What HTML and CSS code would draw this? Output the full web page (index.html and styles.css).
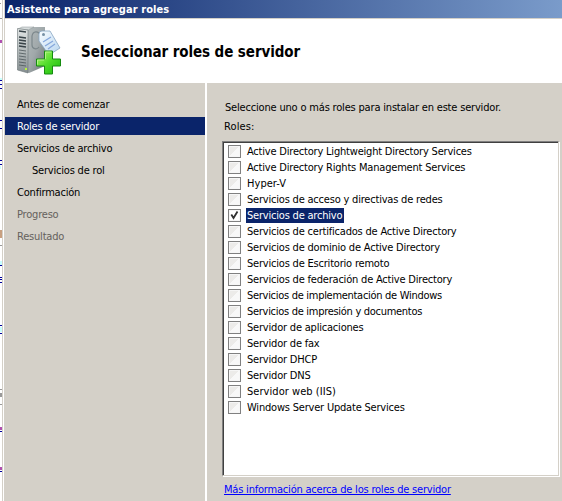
FILE: index.html
```html
<!DOCTYPE html>
<html lang="es">
<head>
<meta charset="utf-8">
<title>Asistente para agregar roles</title>
<link rel="stylesheet" href="styles.css">
</head>
<body>
<div class="screen">
  <div class="edge">
    <svg width="5" height="501" viewBox="0 0 5 501" shape-rendering="crispEdges">
      <path fill="#d4d0c8" d="M2 0h1v501h-1zM4 0h1v501h-1z"/>
      <path fill="#999" d="M0 3h1v1h-1zM0 18h2v1h-2zM0 245h2v1h-2zM0 389h2v1h-2zM0 393h2v4h-2zM0 404h2v1h-2z"/>
      <path fill="#00009c" d="M0 80h2v1h-2zM0 84h2v1h-2zM0 88h2v1h-2zM0 120h2v1h-2zM0 128h2v1h-2zM0 160h2v1h-2zM0 164h2v1h-2zM0 265h2v1h-2zM0 277h2v1h-2zM0 279h2v1h-2zM0 282h2v1h-2zM0 325h2v1h-2zM0 333h2v1h-2zM0 431h2v1h-2zM0 471h2v1h-2z"/>
      <path fill="#b050b0" d="M0 40h2v3h-2zM0 427h2v3h-2zM0 467h2v3h-2z"/>
      <path fill="#c8ffff" d="M0 78h2v2h-2zM0 166h1v3h-1zM0 261h2v4h-2zM0 327h2v5h-2z"/>
      <path fill="#c8a080" d="M0 230h2v8h-2z"/>
    </svg>
  </div>
  <div class="window">
    <div class="titlebar"><span>Asistente para agregar roles</span></div>
    <header class="banner">
      <svg class="icon" width="48" height="50" viewBox="0 0 48 50">
        <defs>
          <linearGradient id="side" x1="0" y1="0" x2="1" y2="1"><stop offset="0" stop-color="#b5bcbd"/><stop offset=".5" stop-color="#a0a8aa"/><stop offset="1" stop-color="#697174"/></linearGradient>
          <linearGradient id="front" x1="0" y1="0" x2="0" y2="1"><stop offset="0" stop-color="#e1e5e5"/><stop offset="1" stop-color="#858e90"/></linearGradient>
          <linearGradient id="plus" x1="0" y1="0" x2="1" y2="1"><stop offset="0" stop-color="#b3f56f"/><stop offset=".5" stop-color="#50dc2a"/><stop offset="1" stop-color="#18b90c"/></linearGradient>
          <linearGradient id="tag" x1="0" y1="0" x2="1" y2="1"><stop offset="0" stop-color="#f8fcff"/><stop offset="1" stop-color="#b7d5ef"/></linearGradient>
        </defs>
        <path fill="url(#side)" d="M11 4 16 1h13v39L13 47 11 46z"/>
        <path fill="#d8dddd" stroke="#899295" stroke-width=".5" d="M2 3 6 1h12l-6 3z"/>
        <path fill="url(#front)" stroke="#697376" stroke-width=".6" d="M1.5 2.5 12 4v43L1.5 44z"/>
        <path stroke="#384348" stroke-width="1.6" d="M3 5l7 1M3 11l7 1M3 14l7 1M3 17l7 1M3 20l7 1"/>
        <path stroke="#4c575b" stroke-width=".8" d="M3 24l7 1M3 27l7 1M3 30l7 1M3 33l7 1M3 36l7 1M3 39l7 1"/>
        <path fill="#b8f43d" d="M9 42h2v2h-2z"/>
        <path fill="none" stroke="#7c878b" stroke-width="1.2" d="M25 10c-3-6-8-5-9 0v9c0 4 5 5 7 2"/>
        <path fill="url(#tag)" stroke="#86a4c1" stroke-width=".8" d="M23 8q0-3 3-3l8 0 10 17-11 7-10-14z"/>
        <circle cx="27.500" cy="8.500" r="1.500" fill="#7791a5"/>
        <path stroke="#85a7dc" stroke-width="1.3" d="M27 16l8-5M29 20l8-5M32 23l7-5"/>
        <path fill="url(#plus)" stroke="#168b10" stroke-linejoin="round" d="M28.500 25h8v8h8v7h-8v8h-8v-8h-8v-7h8z"/>
        <path fill="none" stroke="#c0f799" stroke-width=".8" d="M29.500 33v-7h6M21.500 38.500V34H28"/>
      </svg>
      <h1><span>Seleccionar roles de servidor</span></h1>
    </header>
    <div class="body">
      <nav class="steps">
        <div class="step"><span>Antes de comenzar</span></div>
        <div class="step current"><span>Roles de servidor</span></div>
        <div class="step"><span>Servicios de archivo</span></div>
        <div class="step sub"><span>Servicios de rol</span></div>
        <div class="step"><span>Confirmación</span></div>
        <div class="step pending"><span>Progreso</span></div>
        <div class="step pending"><span>Resultado</span></div>
      </nav>
      <main class="content">
        <p class="intro"><span>Seleccione uno o más roles para instalar en este servidor.</span></p>
        <p class="label"><span>Roles:</span></p>
        <div class="list">
          <div class="role"><i class="box"></i><span>Active Directory Lightweight Directory Services</span></div>
          <div class="role"><i class="box"></i><span>Active Directory Rights Management Services</span></div>
          <div class="role loose"><i class="box"></i><span>Hyper-V</span></div>
          <div class="role"><i class="box"></i><span>Servicios de acceso y directivas de redes</span></div>
          <div class="role selected"><i class="box"><svg width="11" height="11" viewBox="0 0 11 11"><path d="M2.300 4.500 4.500 8 8.500 1.500" fill="none" stroke="#303030" stroke-width="1.800"/></svg></i><span>Servicios de archivo</span></div>
          <div class="role"><i class="box"></i><span>Servicios de certificados de Active Directory</span></div>
          <div class="role"><i class="box"></i><span>Servicios de dominio de Active Directory</span></div>
          <div class="role"><i class="box"></i><span>Servicios de Escritorio remoto</span></div>
          <div class="role"><i class="box"></i><span>Servicios de federación de Active Directory</span></div>
          <div class="role tight"><i class="box"></i><span>Servicios de implementación de Windows</span></div>
          <div class="role tight"><i class="box"></i><span>Servicios de impresión y documentos</span></div>
          <div class="role"><i class="box"></i><span>Servidor de aplicaciones</span></div>
          <div class="role"><i class="box"></i><span>Servidor de fax</span></div>
          <div class="role"><i class="box"></i><span>Servidor DHCP</span></div>
          <div class="role"><i class="box"></i><span>Servidor DNS</span></div>
          <div class="role loose"><i class="box"></i><span>Servidor web (IIS)</span></div>
          <div class="role"><i class="box"></i><span>Windows Server Update Services</span></div>
        </div>
        <a class="more"><span>Más información acerca de los roles de servidor</span></a>
      </main>
    </div>
  </div>
</div>
</body>
</html>
```
FILE: styles.css
```css
* { box-sizing: border-box; }
body {
  margin: 0;
  overflow: hidden;
  background: #fff;
  color: #000;
  font: 11px/16px "DejaVu Sans Condensed", "DejaVu Sans", sans-serif;
  font-stretch: condensed;
  letter-spacing: -0.2px;
  white-space: nowrap;
}
h1, p { margin: 0; }
.screen { display: flex; width: 562px; height: 501px; }
.edge { width: 5px; flex: none; }
.edge svg { display: block; }
.window { flex: 1; display: flex; flex-direction: column; }
.titlebar {
  height: 19px;
  padding-left: 2px;
  border-bottom: 1px solid #d4d0c8;
  background: linear-gradient(to right, #0a246a, #a6caf0) 0 0 / 775px 100%;
  color: #fff;
  font-weight: bold;
  line-height: 19px;
  letter-spacing: 0.08px;
}
.banner { display: flex; height: 64px; padding: 7px 0 0 11px; }
.icon { flex: none; }
h1 { margin-left: 17px; padding-top: 1px; font-size: 15px; line-height: 50px; letter-spacing: -0.08px; }
.body { flex: 1; display: flex; background: #d4d0c8; }
.steps { width: 202px; padding-top: 10px; border-right: 2px solid #fff; }
.step { height: 18px; margin-bottom: 4px; padding-left: 12px; line-height: 20px; }
.step:first-child { margin-top: 2px; }
.current { background: #0a246a; color: #fff; }
.sub { padding-left: 27px; }
.pending { color: #65615d; }
.content { flex: 1; padding: 17px 3px 0 15px; }
.intro { padding-left: 3px; letter-spacing: -0.18px; }
.label { margin-top: 3px; padding-left: 2px; letter-spacing: 0.1px; }
.list {
  height: 335px;
  margin-top: 6px;
  padding: 0 0 0 4px;
  background: #fff;
  border: 1px solid;
  border-color: #808080 #d4d0c8 #d4d0c8 #808080;
  box-shadow: inset 1px 1px #404040, 1px 1px #fff;
  padding: 1px 0 0 5px;
}
.role { display: flex; align-items: center; height: 16px; gap: 5px; }
.role span { height: 15px; padding: 0 1px; line-height: 15px; }
.tight { letter-spacing: -0.29px; }
.loose { letter-spacing: 0.05px; }
.box {
  width: 13px;
  height: 13px;
  border: 1px solid #808080;
  background: linear-gradient(135deg, #ecebe9 0 49%, #f8f8f8 50%);
  box-shadow: inset 0 0 0 1px #f6f6f6;
}
.box svg { display: block; }
.selected .box { background: #fff; }
.selected span { padding-right: 2px; background: #0a246a; color: #fff; }
.more { display: block; margin: 6px 0 0 2px; color: #00f; text-decoration: underline; }
```
